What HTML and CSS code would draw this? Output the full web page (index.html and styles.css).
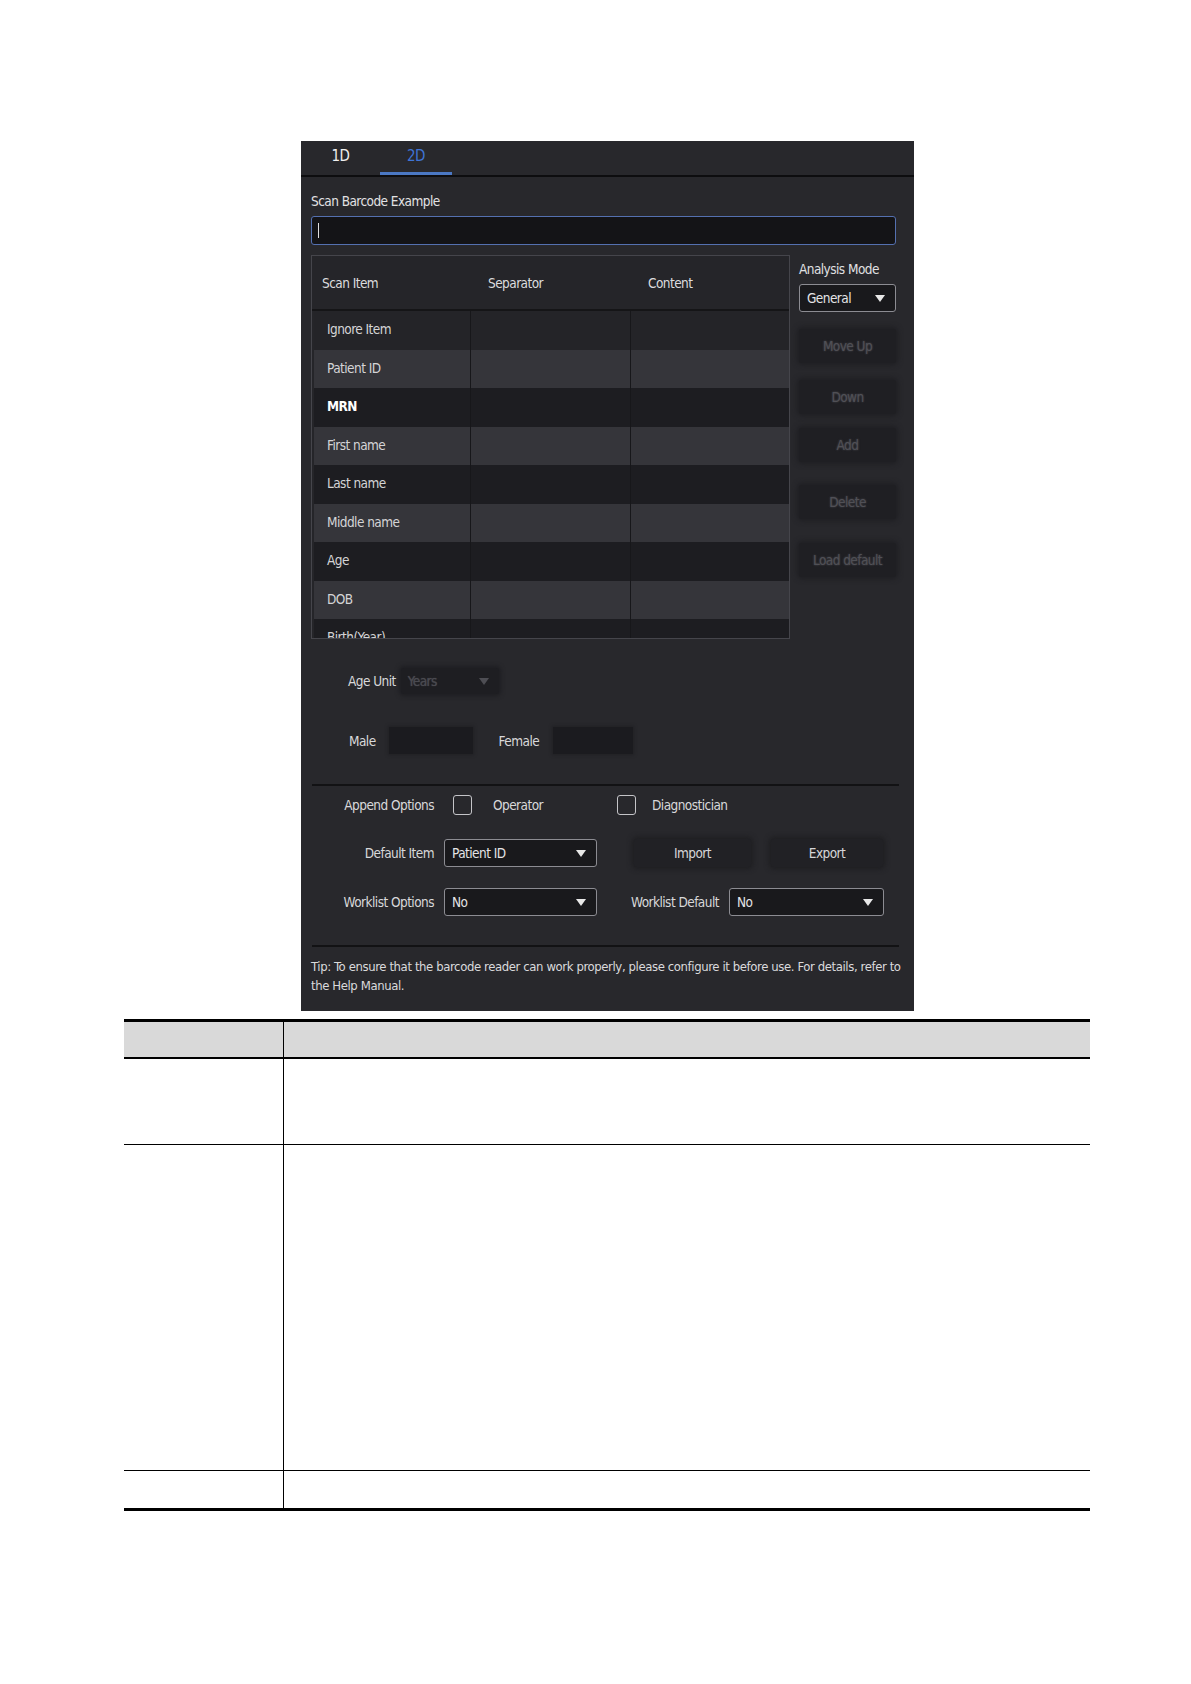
FILE: index.html
```html
<!DOCTYPE html>
<html>
<head>
<meta charset="utf-8">
<link rel="stylesheet" href="styles.css">
</head>
<body>
<div class="page">
  <div class="panel">
    <div class="tabs">
      <div class="tab">1D</div>
      <div class="tab active">2D</div>
    </div>
    <div class="body">
      <div class="label">Scan Barcode Example</div>
      <div class="input"><span class="caret"></span></div>
      <div class="mid">
        <div class="grid">
          <div class="ghead">
            <div class="h1">Scan Item</div>
            <div class="h2">Separator</div>
            <div class="h3">Content</div>
          </div>
          <div class="row dark"><div class="cell first">Ignore Item</div><div class="cell"></div><div class="cell"></div></div>
          <div class="row light"><div class="cell first">Patient ID</div><div class="cell"></div><div class="cell"></div></div>
          <div class="row darker"><div class="cell first strong">MRN</div><div class="cell"></div><div class="cell"></div></div>
          <div class="row light"><div class="cell first">First name</div><div class="cell"></div><div class="cell"></div></div>
          <div class="row darker"><div class="cell first">Last name</div><div class="cell"></div><div class="cell"></div></div>
          <div class="row light"><div class="cell first">Middle name</div><div class="cell"></div><div class="cell"></div></div>
          <div class="row darker"><div class="cell first">Age</div><div class="cell"></div><div class="cell"></div></div>
          <div class="row light"><div class="cell first">DOB</div><div class="cell"></div><div class="cell"></div></div>
          <div class="row darker"><div class="cell first">Birth(Year)</div><div class="cell"></div><div class="cell"></div></div>
        </div>
        <div class="side">
          <div class="side-label">Analysis Mode</div>
          <div class="select mode">General<span class="arrow"></span></div>
          <div class="btns">
            <div class="btn dim b1">Move Up</div>
            <div class="btn dim b2">Down</div>
            <div class="btn dim b3">Add</div>
            <div class="btn dim b4">Delete</div>
            <div class="btn dim b5">Load default</div>
          </div>
        </div>
      </div>
      <div class="age-row">
        <span class="txt">Age Unit</span>
        <div class="select disabled age">Years<span class="arrow"></span></div>
      </div>
      <div class="sex-row">
        <span class="txt">Male</span>
        <div class="box male"></div>
        <span class="txt female-lbl">Female</span>
        <div class="box female"></div>
      </div>
      <div class="sep sep1"></div>
      <div class="opt-row r1">
        <div class="lbl">Append Options</div>
        <span class="check c-op"></span><span class="txt op">Operator</span>
        <span class="check c-diag"></span><span class="txt diag">Diagnostician</span>
      </div>
      <div class="opt-row r2">
        <div class="lbl">Default Item</div>
        <div class="select dd">Patient ID<span class="arrow"></span></div>
        <div class="btn act import">Import</div>
        <div class="btn act export">Export</div>
      </div>
      <div class="opt-row r3">
        <div class="lbl">Worklist Options</div>
        <div class="select dd">No<span class="arrow"></span></div>
        <div class="lbl2">Worklist Default</div>
        <div class="select dd2">No<span class="arrow"></span></div>
      </div>
      <div class="sep sep2"></div>
      <div class="tip">Tip: To ensure that the barcode reader can work properly, please configure it before use. For details, refer to the Help Manual.</div>
    </div>
  </div>
  <table class="doc">
    <tr class="doc-head"><td class="dc1"></td><td class="dc2"></td></tr>
    <tr class="doc-r1"><td class="dc1"></td><td class="dc2"></td></tr>
    <tr class="doc-r2"><td class="dc1"></td><td class="dc2"></td></tr>
    <tr class="doc-r3"><td class="dc1"></td><td class="dc2"></td></tr>
  </table>
</div>
</body>
</html>
```
FILE: styles.css
```css
html, body {
  margin: 0;
  padding: 0;
  background: #ffffff;
}
.page {
  padding-top: 141px;
  font-family: "Liberation Sans Narrow", "DejaVu Sans Condensed", "Roboto Condensed", "Liberation Sans", sans-serif;
}
.panel {
  margin-left: 301px;
  width: 613px;
  height: 870px;
  background: #28282c;
  color: #d8d8da;
  font-size: 13.5px;
  letter-spacing: -0.55px;
  box-sizing: border-box;
  overflow: hidden;
  white-space: nowrap;
}
.tabs {
  display: flex;
  height: 34px;
  border-bottom: 2px solid #0d0d0f;
}
.tab {
  width: 79px;
  text-align: center;
  line-height: 30px;
  font-size: 15px;
  color: #f0f0f0;
}
.tab.active {
  width: 72px;
  color: #3f74d6;
  box-shadow: inset 0 -3px 0 #4b78c4;
}
.body {
  padding: 0 18px 0 10px;
}
.label {
  margin-top: 14px;
  line-height: 20px;
  color: #e2e2e4;
}
.input {
  margin-top: 5px;
  height: 29px;
  box-sizing: border-box;
  border: 1px solid #5470b0;
  border-radius: 3px;
  background: #141417;
  display: flex;
  align-items: center;
  padding-left: 6px;
}
.caret {
  width: 1px;
  height: 15px;
  background: #e0e0e0;
}
.mid {
  margin-top: 10px;
  height: 384px;
  display: flex;
}
.grid {
  width: 479px;
  height: 384px;
  box-sizing: border-box;
  border: 1px solid #45454b;
  overflow: hidden;
  background: #252529;
}
.ghead {
  height: 53px;
  border-bottom: 2px solid #151517;
  display: grid;
  grid-template-columns: 159px 160px 1fr;
  align-items: center;
  color: #dcdcde;
}
.h1 { padding-left: 10px; }
.h2 { padding-left: 17px; }
.h3 { padding-left: 17px; }
.row {
  height: 38.5px;
  display: grid;
  grid-template-columns: 157px 160px 1fr;
  margin-left: 2px;
}
.row.dark { background: #242428; }
.row.darker { background: #1d1d21; }
.row.light { background: #35353a; }
.cell {
  border-right: 1px solid #17171a;
}
.cell:last-child { border-right: none; }
.cell.first {
  padding-left: 13px;
  line-height: 37px;
  color: #d4d4d6;
}
.cell.strong {
  color: #ffffff;
  font-weight: bold;
}
.side {
  margin-left: 9px;
  width: 97px;
}
.side-label {
  margin-top: 4px;
  line-height: 20px;
  color: #e0e0e2;
}
.select {
  position: relative;
  height: 28px;
  box-sizing: border-box;
  border: 1px solid #8c8c92;
  border-radius: 3px;
  background: #19191c;
  line-height: 26px;
  padding-left: 7px;
  color: #e4e4e6;
}
.select.mode {
  margin-top: 5px;
}
.arrow {
  position: absolute;
  right: 10px;
  top: 10px;
  width: 0;
  height: 0;
  border-left: 5px solid transparent;
  border-right: 5px solid transparent;
  border-top: 7px solid #e8e8e8;
}
.btns {
  display: flex;
  flex-direction: column;
}
.b1 { margin-top: 17px; }
.b2 { margin-top: 17px; }
.b3 { margin-top: 14px; }
.b4 { margin-top: 23px; }
.b5 { margin-top: 24px; }
.btn {
  height: 34px;
  line-height: 34px;
  text-align: center;
  background: #1f1f23;
  box-shadow: 0 0 5px 2px #1f1f23;
  border-radius: 3px;
}
.btn.dim {
  color: #505056;
  text-shadow: 0 0 2px #505056;
}
.btn.act {
  color: #d6d6d8;
  background: #212125;
  box-shadow: 0 0 5px 2px #1e1e21;
}
.age-row {
  margin-top: 29px;
  height: 26px;
  display: flex;
  align-items: center;
  padding-left: 37px;
}
.select.disabled {
  border: none;
  background: #1e1e22;
  box-shadow: 0 0 4px 2px #1e1e22;
  color: #4a4a50;
  text-shadow: 0 0 1px #4a4a50;
  height: 26px;
  line-height: 26px;
}
.select.disabled .arrow {
  border-top-color: #4e4e54;
  top: 10px;
}
.select.age {
  margin-left: 5px;
  width: 98px;
}
.sex-row {
  margin-top: 33px;
  height: 27px;
  display: flex;
  align-items: center;
  padding-left: 38px;
}
.box {
  height: 27px;
  background: #1b1b1f;
  box-shadow: 0 0 3px 1px #202024;
}
.box.male {
  margin-left: 13px;
  width: 84px;
}
.female-lbl {
  margin-left: 26px;
}
.box.female {
  margin-left: 14px;
  width: 80px;
}
.sep {
  height: 2px;
  background: #121214;
  margin-right: -3px;
  margin-left: 1px;
}
.sep1 { margin-top: 30px; }
.opt-row {
  display: flex;
  align-items: center;
}
.lbl {
  width: 133px;
  text-align: right;
  padding-right: 10px;
  box-sizing: border-box;
  color: #d8d8da;
}
.r1 {
  margin-top: 8px;
  height: 22px;
}
.check {
  width: 19px;
  height: 20px;
  box-sizing: border-box;
  border: 1.5px solid #c4c4c8;
  border-radius: 3px;
}
.check.c-op { margin-left: 9px; }
.txt.op {
  margin-left: 21px;
  width: 124px;
}
.check.c-diag { margin-right: 16px; }
.r2 {
  margin-top: 23px;
  height: 28px;
}
.select.dd {
  width: 153px;
}
.btn.import {
  margin-left: 37px;
  width: 117px;
  height: 28px;
  line-height: 28px;
}
.btn.export {
  margin-left: 20px;
  width: 112px;
  height: 28px;
  line-height: 28px;
}
.r3 {
  margin-top: 21px;
  height: 28px;
}
.lbl2 {
  margin-left: 34px;
  width: 88px;
}
.select.dd2 {
  margin-left: 10px;
  width: 155px;
}
.sep2 { margin-top: 29px; }
.tip {
  margin-top: 10px;
  font-size: 13px;
  line-height: 19px;
  letter-spacing: -0.4px;
  color: #dadadc;
  margin-right: -10px;
  white-space: normal;
}
.doc {
  margin-left: 124px;
  margin-top: 8px;
  width: 966px;
  border-collapse: collapse;
  border-top: 3px solid #000;
  border-bottom: 3px solid #000;
}
.doc td {
  padding: 0;
}
.dc1 {
  width: 159px;
  border-right: 1px solid #000;
}
.doc-head td {
  height: 35px;
  background: #d9d9d9;
  border-bottom: 2px solid #000;
}
.doc-r1 td {
  height: 85px;
  border-bottom: 1.5px solid #000;
}
.doc-r2 td {
  height: 325px;
  border-bottom: 1.5px solid #000;
}
.doc-r3 td {
  height: 37px;
}
```
